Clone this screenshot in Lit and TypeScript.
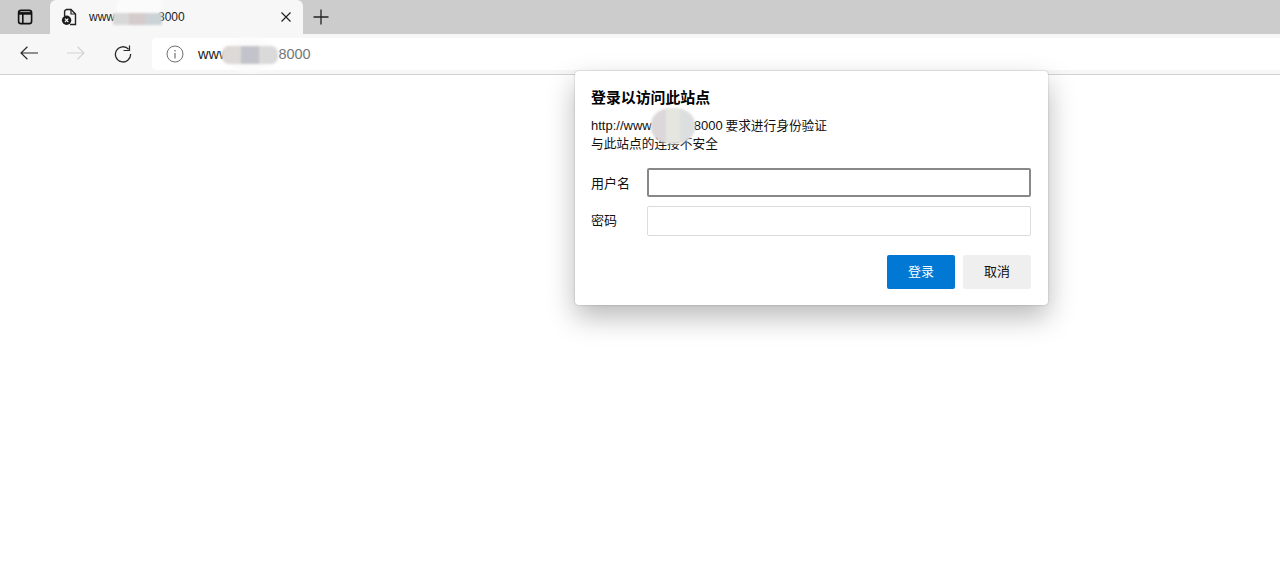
import { LitElement, html, css } from "lit";
import { customElement } from "lit/decorators.js";

@customElement("app-root")
export class AppRoot extends LitElement {
  static styles = css`
    :host { display: block; height: 578px; position: relative; overflow: hidden; background: #fff;
      font-family: "Noto Sans CJK SC", "Liberation Sans", sans-serif; color: #111; }
    * { box-sizing: border-box; }
    .latin { font-family: "Liberation Sans", "Noto Sans CJK SC", sans-serif; font-size: 13px; }
    .tabstrip { height: 34px; background: #cccccc; display: flex; align-items: flex-end; }
    .tabside { width: 50px; height: 34px; display: flex; align-items: center; justify-content: center; }
    .tab { width: 253px; height: 34px; background: #f7f7f7; border-radius: 6px 6px 0 0; display: flex; align-items: center; padding: 0 11px; }
    .tab .title { margin-left: 12px; font: 12px "Liberation Sans", sans-serif; color: #222; flex: 1; display: flex; align-items: center; }
    .newtab { width: 36px; height: 34px; display: flex; align-items: center; justify-content: center; }
    .toolbar { height: 41px; background: #f7f7f7; border-bottom: 1px solid #d2d2d2; display: flex; align-items: center; }
    .navs { display: flex; width: 152px; padding-left: 11px; gap: 11px; }
    .nav { width: 36px; height: 36px; display: flex; align-items: center; justify-content: center; }
    .addr { flex: 1; height: 32px; background: #fff; border-radius: 4px 0 0 4px; display: flex; align-items: center; padding-left: 14px; margin-top: -1px; }
    .addr .url { margin-left: 14px; font: 14.5px "Liberation Sans", sans-serif; color: #777; display: flex; align-items: center; }
    .addr .url b { font-weight: 400; color: #222; }
    .blur { display: inline-block; height: 1em; }
    .mosaic { position: absolute; display: flex; overflow: hidden; filter: blur(1.2px); }
    .mosaic i { display: block; flex: 1; }
    .glow { position: absolute; background: #fbfbfb; border-radius: 50%; filter: blur(2px); }
    .dialog { position: absolute; left: 575px; top: 71px; width: 473px; height: 234px; background: #fff; border-radius: 4px;
      box-shadow: 0 0 2px rgba(0,0,0,.25), 0 12px 28px rgba(0,0,0,.28); padding: 16px 17px 16px 16px; }
    h1 { margin: 0; font-size: 14.9px; line-height: 20px; font-weight: 700; color: #000; }
    .line { font-size: 12.7px; line-height: 18px; height: 18px; white-space: nowrap; }
    .msg { margin-top: 9px; }
    .row { display: flex; align-items: center; margin-top: 9px; }
    .row.first { margin-top: 16px; }
    .row label { width: 56px; font-size: 13px; padding-bottom: 1px; }
    .row label.up { padding-bottom: 3px; }
    .input { flex: 1; height: 30px; background: #fff; border: 1px solid #dcdcdc; border-radius: 2px; }
    .input.focus { height: 29px; border: 2px solid #888; }
    .actions { display: flex; justify-content: flex-end; gap: 8px; margin-top: 19px; }
    button { width: 68px; height: 34px; border: 0; border-radius: 2px; font: inherit; font-size: 13px; padding: 0 0 4px; color: inherit; }
    .primary { background: #0078d4; color: #fff; }
    .secondary { background: #efefef; }
  `;

  render() {
    return html`
      <div class="tabstrip">
        <div class="tabside">
          <svg width="16" height="16" viewBox="0 0 16 16" fill="none" stroke="#111" stroke-width="1.6">
            <rect x="1.6" y="1.4" width="13" height="13.2" rx="2.4"></rect>
            <path d="M1.8 4.4h12.6" stroke-width="2.6"></path>
            <path d="M5.8 5v9.5"></path>
          </svg>
        </div>
        <div class="tab">
          <svg width="16" height="18" viewBox="0 0 16 18" fill="none">
            <path d="M5 1.5h5l4.5 4.5v10.5H9" stroke="#222" stroke-width="1.4"></path>
            <path d="M10 1.5v4.5h4.5" stroke="#222" stroke-width="1.2"></path>
            <path d="M3.6 8V3L5 1.5" stroke="#222" stroke-width="1.4"></path>
            <circle cx="5.6" cy="12.3" r="4.7" fill="#1c1c1c"></circle>
            <path d="M3.9 10.6l3.4 3.4M7.3 10.6l-3.4 3.4" stroke="#fff" stroke-width="1.1"></path>
          </svg>
          <span class="title">www<span class="blur" style="width:43px"></span>8000</span>
          <svg width="12" height="12" viewBox="0 0 12 12" fill="none" stroke="#222" stroke-width="1.2">
            <path d="M1.5 1.5l9 9M10.5 1.5l-9 9"></path>
          </svg>
        </div>
        <div class="newtab">
          <svg width="16" height="16" viewBox="0 0 16 16" stroke="#222" stroke-width="1.3"><path d="M8 .5v15M.5 8h15"></path></svg>
        </div>
      </div>
      <div class="toolbar">
        <div class="navs">
          <div class="nav">
            <svg width="18" height="16" viewBox="0 0 18 16" fill="none" stroke="#2a2a2a" stroke-width="1.2"><path d="M1 7h17M7.4 .8L1 7l6.4 6.2"></path></svg>
          </div>
          <div class="nav">
            <svg width="18" height="16" viewBox="0 0 18 16" fill="none" stroke="#d4d4d4" stroke-width="1.2"><path d="M0 7h17M10.6 .8L17 7l-6.4 6.2"></path></svg>
          </div>
          <div class="nav">
            <svg width="18" height="18" viewBox="0 0 18 18" fill="none" stroke="#2a2a2a" stroke-width="1.3"><path d="M14.6 4.2A7.6 7.6 0 1 0 16.6 9"></path><path d="M9.5 5.5h6V0.5" stroke-width="1.2"></path></svg>
          </div>
        </div>
        <div class="addr">
          <svg width="18" height="18" viewBox="0 0 18 18" fill="none" stroke="#707070"><circle cx="9" cy="9" r="8" stroke-width="1"></circle><path d="M9 8v5.5" stroke-width="1.2"></path><path d="M9 5v1.4" stroke-width="1.2"></path></svg>
          <span class="url"><b>www</b><span class="blur" style="width:49px"></span>8000</span>
        </div>
      </div>

      <div class="dialog">
        <h1>登录以访问此站点</h1>
        <div class="msg">
          <div class="line"><span class="latin">http://www</span><span class="blur" style="width:42px"></span><span class="latin">8000</span> 要求进行身份验证</div>
          <div class="line">与此站点的连接不安全</div>
        </div>
        <div class="row first"><label>用户名</label><div class="input focus"></div></div>
        <div class="row"><label class="up">密码</label><div class="input"></div></div>
        <div class="actions">
          <button class="primary">登录</button>
          <button class="secondary">取消</button>
        </div>
      </div>

      <div class="glow" style="left:116px;top:-8px;width:46px;height:30px"></div>
      <div class="mosaic" style="left:113px;top:13px;width:49px;height:12px"><i style="background:#d8d8d8"></i><i style="background:#d4cccc"></i><i style="background:#ccd3d6"></i></div>
      <div class="glow" style="left:224px;top:38px;width:52px;height:34px"></div>
      <div class="mosaic" style="left:222px;top:46px;width:56px;height:18px;border-radius:7px"><i style="background:#ddd9d6"></i><i style="background:#c3c3cb"></i><i style="background:#dadada"></i></div>
      <div class="mosaic" style="left:651px;top:108px;width:44px;height:36px;border-radius:45%"><i style="background:#dcd8da"></i><i style="background:#e6e6e0"></i><i style="background:#dcdedf"></i></div>
    `;
  }
}
